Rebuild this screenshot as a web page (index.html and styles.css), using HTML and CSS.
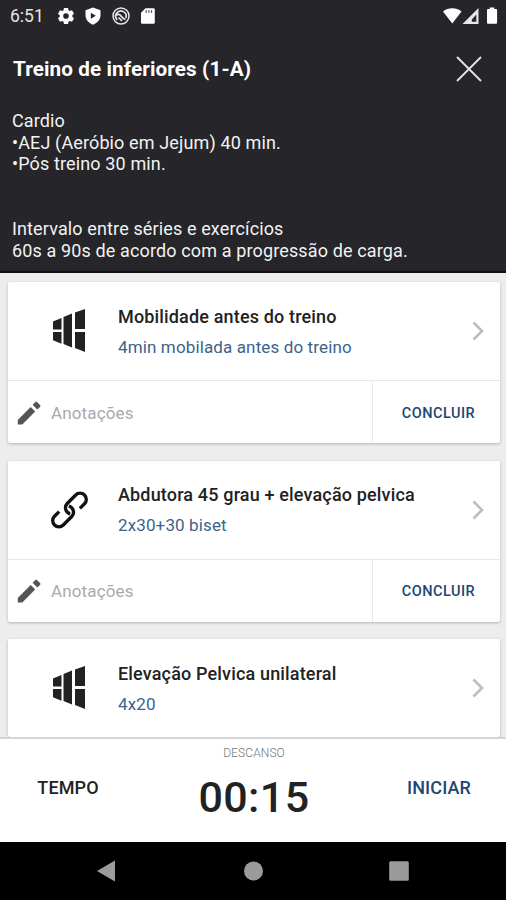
FILE: index.html
```html
<!DOCTYPE html>
<html lang="pt-BR">
<head>
  <meta charset="UTF-8">
  <meta name="viewport" content="width=device-width, initial-scale=1.0">
  <title>Treino de inferiores</title>
  <link rel="stylesheet" href="styles.css">
</head>
<body>
  <!-- Header -->
  <header class="header">
    <div class="status-bar">
      <span class="clock">6:51</span>
      <svg class="status-icon" viewBox="0 0 18 18">
        <path fill="#fff" fill-rule="evenodd" d="M7 1h4l.5 2.200 1.300.8 2.200-.8 2 3.500-1.700 1.500v1.600l1.700 1.500-2 3.500-2.200-.8-1.300.8L11 17H7l-.5-2.200-1.300-.8-2.200.8-2-3.500 1.700-1.500V8.200L1 6.700l2-3.500 2.200.8 1.300-.8zM9 6.200a2.800 2.800 0 1 0 0 5.600 2.800 2.800 0 0 0 0-5.600z"/>
      </svg>
      <svg class="status-icon" viewBox="0 0 18 18">
        <path fill="#fff" fill-rule="evenodd" d="M9 .5l7.500 2.800v5c0 4.200-3 7.700-7.500 9.400-4.500-1.700-7.500-5.200-7.500-9.400v-5zM6.800 5.800v6l5-3z"/>
      </svg>
      <svg class="status-icon" viewBox="0 0 18 18">
        <circle cx="9" cy="9" r="8" fill="none" stroke="#e8e8e8" stroke-width="1.500"/>
        <path fill="none" stroke="#e8e8e8" stroke-width="1.700" d="M5.200 12.800A5.200 5.200 0 1 1 13.800 11M4.500 8c2-1 3.500-.5 4.500 1s2.300 2.800 4.500 3.500M6.500 10.500l3.500 3.300"/>
      </svg>
      <svg class="status-icon" viewBox="0 0 18 18">
        <path fill="#fff" fill-rule="evenodd" d="M6.500 1.200h7.800c1 0 1.500.5 1.500 1.500v12.600c0 1-.5 1.500-1.500 1.500H3.500c-1 0-1.500-.5-1.500-1.500V5.700zM6.700 3.300v2.500h1V3.300zm2.700 0v2.500h1V3.300zm2.700 0v2.500h1V3.300z"/>
      </svg>
      <svg class="signal" viewBox="0 0 58 20">
        <path fill="#fff" d="M1 5.500C6 1.200 14.500 1.200 19.500 5.500L10.300 17.500z"/>
        <path fill="#e8e8e8" fill-rule="evenodd" d="M36.500 2v16H20.500zM34.300 8.500l-4.500 5v2.300h4.500z"/>
        <path fill="#fff" d="M46.300 3h1.500V1.500h4.500V3h1.500c.8 0 1.300.5 1.300 1.300v12.200c0 .8-.5 1.300-1.300 1.300h-7.500c-.8 0-1.300-.5-1.300-1.300V4.300c0-.8.5-1.300 1.300-1.300z"/>
      </svg>
    </div>
    <div class="title-bar">
      <h1>Treino de inferiores (1-A)</h1>
      <svg class="close" viewBox="0 0 26 26">
        <path d="M1 1l24 24M25 1L1 25"/>
      </svg>
    </div>
    <p class="notes">Cardio<br>•AEJ (Aeróbio em Jejum) 40 min.<br>•Pós treino 30 min.<br><br><br>Intervalo entre séries e exercícios<br>60s a 90s de acordo com a progressão de carga.</p>
  </header>

  <!-- Exercises -->
  <main class="exercises">
    <div class="card">
      <div class="exercise">
        <svg class="exercise-icon" viewBox="0 0 40 44">
          <path d="M4 12.500l8.500-3.500v11.500H4zM4 23h8.500v11.800L4 31.300zM14.500 8l8.500-3.500v34L14.500 35zM26 3.500L36 0v20H26zM26 23h10v20L26 39z"/>
        </svg>
        <div class="info">
          <h2>Mobilidade antes do treino</h2>
          <p>4min mobilada antes do treino</p>
        </div>
        <svg class="arrow" viewBox="0 0 12 20"><path d="M1.500 1.500L10 10l-8.500 8.500"/></svg>
      </div>
      <div class="actions">
        <div class="annotation">
          <svg class="pencil" viewBox="0 0 24 24">
            <path d="M.8 19v4.500h4.500L18.200 10.600l-4.500-4.500zM23 6c.6-.6.600-1.400 0-2L20.200 1.200c-.6-.6-1.400-.6-2 0l-2.600 2.600 4.700 4.700z"/>
          </svg>
          <span>Anotações</span>
        </div>
        <div class="finish">CONCLUIR</div>
      </div>
    </div>

    <div class="card">
      <div class="exercise">
        <svg class="exercise-icon link" viewBox="0 0 40 44">
          <g transform="translate(20.500 22) rotate(-45)">
            <path d="M8.500 6.200h6.500a6.200 6.200 0 0 0 0-12.400H3a6.200 6.200 0 0 0-5.200 9.400"/>
            <path d="M-8.500-6.200h-6.500a6.200 6.200 0 0 0 0 12.400H-3a6.200 6.200 0 0 0 5.200-9.400"/>
          </g>
        </svg>
        <div class="info">
          <h2>Abdutora 45 grau + elevação pelvica</h2>
          <p>2x30+30 biset</p>
        </div>
        <svg class="arrow" viewBox="0 0 12 20"><path d="M1.500 1.500L10 10l-8.500 8.500"/></svg>
      </div>
      <div class="actions">
        <div class="annotation">
          <svg class="pencil" viewBox="0 0 24 24">
            <path d="M.8 19v4.500h4.500L18.200 10.600l-4.500-4.500zM23 6c.6-.6.600-1.400 0-2L20.200 1.200c-.6-.6-1.400-.6-2 0l-2.600 2.600 4.700 4.700z"/>
          </svg>
          <span>Anotações</span>
        </div>
        <div class="finish">CONCLUIR</div>
      </div>
    </div>

    <div class="card">
      <div class="exercise">
        <svg class="exercise-icon" viewBox="0 0 40 44">
          <path d="M4 12.500l8.500-3.500v11.500H4zM4 23h8.500v11.800L4 31.300zM14.500 8l8.500-3.500v34L14.500 35zM26 3.500L36 0v20H26zM26 23h10v20L26 39z"/>
        </svg>
        <div class="info">
          <h2>Elevação Pelvica unilateral</h2>
          <p>4x20</p>
        </div>
        <svg class="arrow" viewBox="0 0 12 20"><path d="M1.500 1.500L10 10l-8.500 8.500"/></svg>
      </div>
    </div>
  </main>

  <!-- Rest timer -->
  <footer class="timer">
    <div class="timer-btn">TEMPO</div>
    <div class="rest">
      <span class="rest-label">DESCANSO</span>
      <span class="rest-time">00:15</span>
    </div>
    <div class="timer-btn start">INICIAR</div>
  </footer>

  <!-- Android navigation -->
  <nav class="nav-bar">
    <svg viewBox="0 0 22 22"><path d="M19 .5v21L1 11z"/></svg>
    <svg viewBox="0 0 22 22"><circle cx="11.500" cy="11" r="9.500"/></svg>
    <svg viewBox="0 0 22 22"><rect x="1.200" y="1.200" width="19.600" height="19.600" rx="1.500"/></svg>
  </nav>
</body>
</html>
```
FILE: styles.css
```css
* {
  box-sizing: border-box;
}

body {
  margin: 0;
  height: 900px;
  display: flex;
  flex-direction: column;
  overflow: hidden;
  background-color: #ededee;
  font-family: Roboto, "Liberation Sans", sans-serif;
  color: #222;
}

h1, h2, p {
  margin: 0;
}

svg {
  display: block;
  flex-shrink: 0;
}

/* Header */
.header {
  height: 273px;
  flex-shrink: 0;
  background-color: #262529;
  border-bottom: 2px solid #111;
  color: #f2f2f2;
}

.status-bar {
  height: 32px;
  display: flex;
  align-items: center;
  padding: 0 6px 0 10px;
}

.clock {
  width: 47px;
  font-size: 17.5px;
  color: #e4e4e4;
}

.status-icon {
  width: 18px;
  height: 18px;
  margin-right: 9.3px;
}

.signal {
  width: 58px;
  height: 20px;
  margin-left: auto;
}

.title-bar {
  height: 74px;
  display: flex;
  align-items: center;
  justify-content: space-between;
  padding: 0 24px 0 13px;
}

.title-bar h1 {
  font-size: 20.7px;
  font-weight: 700;
  letter-spacing: 0.1px;
  color: #fff;
}

.close {
  width: 26px;
  height: 26px;
}

.close path {
  fill: none;
  stroke: #e6e6e6;
  stroke-width: 1.8;
}

.notes {
  padding: 4px 12px 0;
  font-size: 18px;
  line-height: 21.6px;
  letter-spacing: 0.13px;
}

/* Exercise cards */
.exercises {
  height: 464px;
  flex-shrink: 0;
  overflow: hidden;
  display: flex;
  flex-direction: column;
  gap: 17.6px;
  padding: 9px 6px 0 8px;
}

.card {
  flex-shrink: 0;
  background-color: #fff;
  border-radius: 2px;
  box-shadow: 0 1px 3px rgba(0, 0, 0, 0.25);
}

.exercise {
  height: 98px;
  display: flex;
  align-items: center;
  padding: 0 16px 0 41px;
}

.exercise-icon {
  width: 40px;
  height: 44px;
  fill: #222;
}

.exercise-icon.link path {
  fill: none;
  stroke: #111;
  stroke-width: 3.3;
}

.info {
  flex: 1;
  padding: 1px 0 0 29px;
}

.info h2 {
  font-size: 18px;
  font-weight: 500;
  line-height: 30px;
  letter-spacing: 0.16px;
  white-space: nowrap;
}

.info p {
  font-size: 17px;
  line-height: 30px;
  letter-spacing: 0.13px;
  color: #3c638c;
}

.arrow {
  width: 12px;
  height: 20px;
}

.arrow path {
  fill: none;
  stroke: #bdbdbd;
  stroke-width: 2.6;
}

.actions {
  height: 63px;
  display: flex;
  border-top: 1px solid #e8e8e8;
}

.annotation {
  flex: 1;
  display: flex;
  align-items: center;
  gap: 10px;
  padding: 1px 0 0 9px;
  font-size: 17px;
  letter-spacing: 0.13px;
  color: #aaa;
}

.pencil {
  width: 24px;
  height: 24px;
  fill: #555;
}

.finish {
  width: 128px;
  display: flex;
  align-items: center;
  justify-content: center;
  padding: 2px 0 0 4px;
  border-left: 1px solid #e8e8e8;
  font-size: 14.5px;
  font-weight: 500;
  letter-spacing: 0.5px;
  color: #1d4672;
}

/* Rest timer */
.timer {
  height: 105px;
  flex-shrink: 0;
  display: flex;
  justify-content: space-between;
  background-color: #fff;
  border-top: 2px solid #d4d4d4;
}

.timer-btn {
  width: 136px;
  padding-top: 38px;
  text-align: center;
  font-size: 18px;
  line-height: 22px;
  font-weight: 500;
  letter-spacing: 0.1px;
}

.start {
  width: 134px;
  color: #1d4672;
}

.rest {
  display: flex;
  flex-direction: column;
  align-items: center;
  padding-top: 7px;
}

.rest-label {
  font-size: 12px;
  font-weight: 300;
  line-height: 14px;
  letter-spacing: 0.1px;
  color: #777;
}

.rest-time {
  margin-top: 12px;
  font-size: 43px;
  line-height: 50px;
  font-weight: 500;
  letter-spacing: 0.4px;
}

/* Android navigation */
.nav-bar {
  height: 58px;
  flex-shrink: 0;
  display: flex;
  justify-content: space-between;
  align-items: center;
  padding: 0 96px;
  background-color: #000;
}

.nav-bar svg {
  width: 22px;
  height: 22px;
  fill: #9b9b9b;
}
```
